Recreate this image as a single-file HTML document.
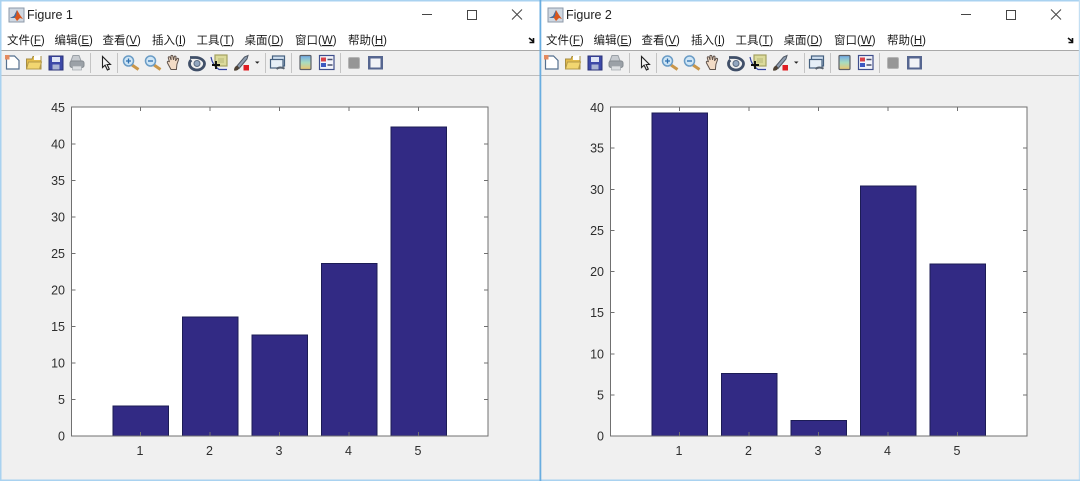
<!DOCTYPE html>
<html lang="zh">
<head>
<meta charset="utf-8">
<title>Figure 1 and Figure 2</title>
<style>
html,body{margin:0;padding:0;background:#fff;width:1080px;height:481px;overflow:hidden}
svg{display:block;position:absolute;left:0;top:0}
.title{font:12.5px "Liberation Sans",sans-serif;fill:#222}
.menu{font:11.5px "Liberation Sans","Noto Sans CJK SC",sans-serif;fill:#1c1c1c}
.t{font:12.5px "Liberation Sans",sans-serif;fill:#2e2e2e}
.e{text-anchor:end}.m{text-anchor:middle}
</style>
</head>
<body>
<svg width="1080" height="481" viewBox="0 0 1080 481" xmlns="http://www.w3.org/2000/svg">
<defs>
<filter id="all" x="0" y="0" width="100%" height="100%"><feGaussianBlur stdDeviation="0.3"/></filter>
<filter id="soft" x="-5%" y="-5%" width="110%" height="110%"><feGaussianBlur stdDeviation="0.35"/></filter>
<linearGradient id="cb" x1="0" y1="0" x2="0" y2="1"><stop offset="0" stop-color="#6fa8e8"/><stop offset=".5" stop-color="#a8dcc0"/><stop offset="1" stop-color="#eec66c"/></linearGradient>
<g id="chrome">
  <rect x="0" y="0" width="540" height="50" fill="#fff"/>
  <rect x="0" y="50" width="540" height="431" fill="#f0f0f0"/>
  <rect x="0" y="50" width="540" height="1" fill="#a9a9a9"/>
  <rect x="0" y="75" width="540" height="1" fill="#bdbdbd"/>
  <!-- matlab logo -->
  <rect x="9" y="8" width="15" height="14" fill="#cfd8e2" stroke="#8d99a8"/>
  <path d="M10 18l4-2 3-6 3 5 3 4-3-1-3 3-2-3z" fill="#d9541e"/>
  <path d="M10 18l4-2 3-6-1 6-2 2z" fill="#3b6fa8"/>
  <!-- caption buttons -->
  <path d="M422 14.500h10" stroke="#444" fill="none"/>
  <rect x="467.500" y="10.500" width="9" height="9" fill="none" stroke="#444"/>
  <path d="M512 9.500l10 10M522 9.500l-10 10" stroke="#444" fill="none"/>
  <path d="M529 38l5 4M533.500 38v4.500h-4" stroke="#111" stroke-width="1.600" fill="none"/>
  <g filter="url(#soft)">
  <!-- new -->
  <path d="M6.500 56h8l4.500 4.500V69H6.500z" fill="#fff" stroke="#54708f" stroke-width="1.200"/>
  <rect x="5" y="55" width="4.500" height="4.500" fill="#e58a5e"/>
  <!-- open -->
  <path d="M26.500 59h5.500l1-2.500h8V69h-14.500z" fill="#e4bd4c" stroke="#a68d42"/>
  <path d="M34 56l6.500-1v5H34z" fill="#fff"/>
  <path d="M26.500 69l2-7h13l-2 7z" fill="#f2d670" stroke="#b59a48"/>
  <!-- save -->
  <rect x="49" y="56" width="14" height="14" fill="#3c4aa8" stroke="#2b3378"/>
  <rect x="52" y="57" width="8" height="5" fill="#dfe5f5"/>
  <rect x="52.500" y="64.500" width="7" height="5" fill="#aab4d4"/>
  <!-- print -->
  <path d="M73 55.500h6l2.500 6.500H70.500z" fill="#c7cbd0" stroke="#9aa0a6"/>
  <rect x="70" y="61" width="14" height="6.500" rx="2" fill="#9ba1a7" stroke="#858b91"/>
  <rect x="72.500" y="66" width="9" height="4" fill="#dcdfe2" stroke="#a0a5ab" stroke-width=".7"/>
  <rect x="90" y="53" width="1" height="20" fill="#c4c4c4"/>
  <!-- pointer -->
  <path d="M102.500 56.500V67.500l2.600-2.300 2.300 4.800 1.900-.9-2.200-4.600h3.400z" fill="#f4f4f4" stroke="#222" stroke-width="1.100"/>
  <rect x="117" y="53" width="1" height="20" fill="#c4c4c4"/>
  <!-- zoom in -->
  <path d="M132 65l6.500 4.500" stroke="#c9964a" stroke-width="3"/>
  <circle cx="128.500" cy="61" r="5" fill="#cfe6f6" stroke="#6a9cc6" stroke-width="1.500"/>
  <path d="M126 61h5M128.500 58.500v5" stroke="#2e6fb0" stroke-width="1.300"/>
  <!-- zoom out -->
  <path d="M154 65l6.500 4.500" stroke="#c9964a" stroke-width="3"/>
  <circle cx="150.500" cy="61" r="5" fill="#cfe6f6" stroke="#6a9cc6" stroke-width="1.500"/>
  <path d="M148 61h5" stroke="#2e6fb0" stroke-width="1.300"/>
  <!-- hand -->
  <path d="M171 69.500l-3.500-6.500c-.8-1.800 1-2.200 2-1l-1.200-4c-.3-1.500 1.500-1.700 2-.3l.8 2.300-.2-3.500c0-1.500 1.800-1.500 2-.1l.6 3.500.7-3c.4-1.300 2-1 1.800.4l-.5 3.500 1.400-2c.9-1 2.100-.2 1.600 1l-1.600 4.500-.5 5.200z" fill="#f3dcc6" stroke="#5f524c"/>
  <!-- rotate -->
  <path d="M190 57.500h5.500c5.500 0 9 3.500 9 6 0 3.500-3.500 6.500-7.500 6.500-4.500 0-7.500-3-7.500-6.300 0-1.500.7-2.800 1.800-3.700" fill="none" stroke="#3f4f68" stroke-width="2.800"/>
  <circle cx="197" cy="63.500" r="3" fill="#93a7c0" stroke="#5b6c82"/>
  <!-- data cursor -->
  <rect x="215" y="55" width="12" height="11" fill="#dcdb9c" stroke="#a3a262" stroke-width="1.200"/>
  <rect x="218" y="58" width="6" height="5" fill="#c9c98a"/>
  <path d="M211 57c1 6 4 10 8 12.500h8" fill="none" stroke="#3342a0" stroke-width="1.200"/>
  <path d="M212 65h8M216 61v8" stroke="#111" stroke-width="1.900"/>
  <!-- brush -->
  <path d="M236.500 66.500l8-9.500 3.500-1.500-1 3.500-8 9.500z" fill="#8f9db0" stroke="#505965"/>
  <path d="M234 70.500c0-3 1.500-4.800 3.500-4.800l1.500 1.800c0 2.500-2.300 3.500-5 3z" fill="#4f4335"/>
  <rect x="243.500" y="65" width="5.500" height="5.500" fill="#e01b24"/>
  <path d="M255 61.500h4.500l-2.250 2.300z" fill="#222"/>
  <rect x="265" y="53" width="1" height="20" fill="#c4c4c4"/>
  <!-- link plot -->
  <rect x="272.500" y="56" width="12" height="10" fill="#cfdff0" stroke="#45607f" stroke-width="1.200"/>
  <rect x="270.500" y="59.500" width="12.500" height="8.500" fill="#e6eff7" stroke="#45607f" stroke-width="1.200"/>
  <path d="M276.500 69c2-2 5.500-2 8-.3" fill="none" stroke="#59636f" stroke-width="2"/>
  <rect x="291" y="53" width="1" height="20" fill="#c4c4c4"/>
  <!-- colorbar -->
  <rect x="300" y="55.500" width="11" height="14" rx="1" fill="url(#cb)" stroke="#5d6168" stroke-width="1.200"/>
  <!-- legend -->
  <rect x="319.500" y="55.500" width="14.500" height="14" fill="#f3f4fa" stroke="#41508c" stroke-width="1.200"/>
  <rect x="321" y="57.500" width="5" height="4" fill="#d8414a"/>
  <rect x="321" y="63" width="5" height="4" fill="#3e58c0"/>
  <path d="M327.500 59.500h5M327.500 65h5" stroke="#48506e" stroke-width="1.500"/>
  <rect x="340" y="53" width="1" height="20" fill="#c4c4c4"/>
  <!-- grey -->
  <rect x="348.500" y="57.500" width="11" height="11" rx="1.500" fill="#969696" stroke="#b4b4b4"/>
  <!-- frame -->
  <rect x="368" y="56" width="15" height="13.500" fill="#566690"/>
  <rect x="370.500" y="58.500" width="10" height="9" fill="#f2f3f7"/>
  </g>
</g>
</defs>

<g filter="url(#all)">
<use href="#chrome"/>
<use href="#chrome" x="539"/>

<!-- window borders -->
<rect x="0" y="0" width="1080" height="1.500" fill="#a9d2f0"/>
<rect x="0" y="0" width="1.500" height="481" fill="#a9d2f0"/>
<rect x="1078.800" y="0" width="1.200" height="481" fill="#c3dff3"/>
<rect x="0" y="479.500" width="1080" height="1.500" fill="#a9d2f0"/>
<rect x="539.500" y="0" width="1.800" height="481" fill="#69ade0"/>

<!-- Figure 1 text -->
<text class="title" x="27" y="19">Figure 1</text>
<text class="menu" x="7" y="44">文件(<tspan text-decoration="underline">F</tspan>)</text>
<text class="menu" x="54.500" y="44">编辑(<tspan text-decoration="underline">E</tspan>)</text>
<text class="menu" x="102.500" y="44">查看(<tspan text-decoration="underline">V</tspan>)</text>
<text class="menu" x="152" y="44">插入(<tspan text-decoration="underline">I</tspan>)</text>
<text class="menu" x="196.500" y="44">工具(<tspan text-decoration="underline">T</tspan>)</text>
<text class="menu" x="244.500" y="44">桌面(<tspan text-decoration="underline">D</tspan>)</text>
<text class="menu" x="295" y="44">窗口(<tspan text-decoration="underline">W</tspan>)</text>
<text class="menu" x="348" y="44">帮助(<tspan text-decoration="underline">H</tspan>)</text>

<!-- Figure 2 text -->
<text class="title" x="566" y="19">Figure 2</text>
<text class="menu" x="546" y="44">文件(<tspan text-decoration="underline">F</tspan>)</text>
<text class="menu" x="593.500" y="44">编辑(<tspan text-decoration="underline">E</tspan>)</text>
<text class="menu" x="641.500" y="44">查看(<tspan text-decoration="underline">V</tspan>)</text>
<text class="menu" x="691" y="44">插入(<tspan text-decoration="underline">I</tspan>)</text>
<text class="menu" x="735.500" y="44">工具(<tspan text-decoration="underline">T</tspan>)</text>
<text class="menu" x="783.500" y="44">桌面(<tspan text-decoration="underline">D</tspan>)</text>
<text class="menu" x="834" y="44">窗口(<tspan text-decoration="underline">W</tspan>)</text>
<text class="menu" x="887" y="44">帮助(<tspan text-decoration="underline">H</tspan>)</text>

<!-- Axes 1 -->
<rect x="71.500" y="107" width="416.500" height="329" fill="#fff"/>
<g fill="#322984" stroke="#1d1a55">
<rect x="113" y="406" width="55.500" height="30"/>
<rect x="182.500" y="317" width="55.500" height="119"/>
<rect x="252" y="335" width="55.500" height="101"/>
<rect x="321.500" y="263.500" width="55.500" height="172.500"/>
<rect x="391" y="127" width="55.500" height="309"/>
</g>
<rect x="71.500" y="107" width="416.500" height="329" fill="none" stroke="#707070"/>
<path stroke="#707070" fill="none" d="M140.500 107v4M210 107v4M279.500 107v4M349 107v4M418.500 107v4M140.500 436v-4M210 436v-4M279.500 436v-4M349 436v-4M418.500 436v-4
M71.500 399.500h4M71.500 363h4M71.500 326.500h4M71.500 290h4M71.500 253.500h4M71.500 217h4M71.500 180.500h4M71.500 144h4
M488 399.500h-4M488 363h-4M488 326.500h-4M488 290h-4M488 253.500h-4M488 217h-4M488 180.500h-4M488 144h-4"/>
<text class="t e" x="65" y="440.500">0</text>
<text class="t e" x="65" y="404">5</text>
<text class="t e" x="65" y="367.500">10</text>
<text class="t e" x="65" y="331">15</text>
<text class="t e" x="65" y="294.500">20</text>
<text class="t e" x="65" y="258">25</text>
<text class="t e" x="65" y="221.500">30</text>
<text class="t e" x="65" y="185">35</text>
<text class="t e" x="65" y="148.500">40</text>
<text class="t e" x="65" y="112">45</text>
<text class="t m" x="140" y="455">1</text>
<text class="t m" x="209.500" y="455">2</text>
<text class="t m" x="279" y="455">3</text>
<text class="t m" x="348.500" y="455">4</text>
<text class="t m" x="418" y="455">5</text>

<!-- Axes 2 -->
<rect x="610.500" y="107" width="416.500" height="329" fill="#fff"/>
<g fill="#322984" stroke="#1d1a55">
<rect x="652" y="113" width="55.500" height="323"/>
<rect x="721.500" y="373.500" width="55.500" height="62.500"/>
<rect x="791" y="420.500" width="55.500" height="15.500"/>
<rect x="860.500" y="186" width="55.500" height="250"/>
<rect x="930" y="264" width="55.500" height="172"/>
</g>
<rect x="610.500" y="107" width="416.500" height="329" fill="none" stroke="#707070"/>
<path stroke="#707070" fill="none" d="M679.500 107v4M749 107v4M818.500 107v4M888 107v4M957.500 107v4M679.500 436v-4M749 436v-4M818.500 436v-4M888 436v-4M957.500 436v-4
M610.500 395h4M610.500 354h4M610.500 312.500h4M610.500 271.500h4M610.500 230.500h4M610.500 189.500h4M610.500 148h4
M1027 395h-4M1027 354h-4M1027 312.500h-4M1027 271.500h-4M1027 230.500h-4M1027 189.500h-4M1027 148h-4"/>
<text class="t e" x="604" y="440.500">0</text>
<text class="t e" x="604" y="399.500">5</text>
<text class="t e" x="604" y="358.500">10</text>
<text class="t e" x="604" y="317">15</text>
<text class="t e" x="604" y="276">20</text>
<text class="t e" x="604" y="235">25</text>
<text class="t e" x="604" y="194">30</text>
<text class="t e" x="604" y="152.500">35</text>
<text class="t e" x="604" y="112">40</text>
<text class="t m" x="679" y="455">1</text>
<text class="t m" x="748.500" y="455">2</text>
<text class="t m" x="818" y="455">3</text>
<text class="t m" x="887.500" y="455">4</text>
<text class="t m" x="957" y="455">5</text>
</g>
</svg>
</body>
</html>
